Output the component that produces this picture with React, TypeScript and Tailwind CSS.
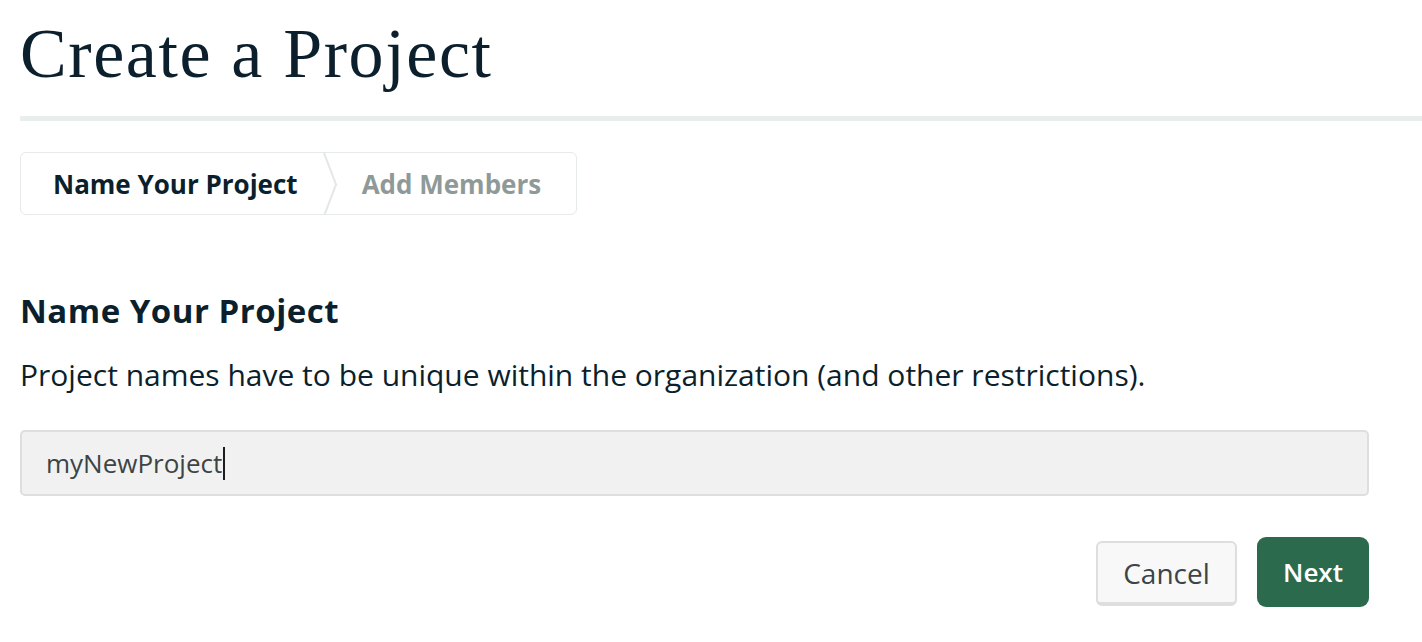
export default function App() {
  return (
    <div className="min-h-[642px] w-full bg-white pl-5 text-[#001e2b]" style={{ fontFamily: '"Open Sans", "Liberation Sans", sans-serif' }}>
      <h1
        className="pt-[14px] text-[70px] leading-[80px] font-normal tracking-[1.6px] text-[#0b1f2c]"
        style={{ fontFamily: '"Liberation Serif", serif' }}
      >
        Create a Project
      </h1>
      <div className="mt-[22px] h-[5px] w-full bg-[#e7eeec]" />

      <div className="mt-[31px] flex h-[63px] w-[557px] items-stretch overflow-hidden rounded-[6px] border border-[#e6eae9]">
        <div className="flex items-center pl-8 pr-[24px] pt-[1px] text-[26px] font-bold text-[#0b1f2c]">Name Your Project</div>
        <svg width="16" height="63" viewBox="0 0 16 63" className="shrink-0">
          <path d="M2 0 L14 31.5 L2 63" fill="none" stroke="#e3e7e6" strokeWidth="2" />
        </svg>
        <div className="flex items-center pl-[24px] pt-[1px] text-[26px] font-bold text-[#8f9a98]">Add Members</div>
      </div>

      <h2 className="mt-[76px] text-[33px] font-bold leading-[40px] tracking-[0.5px] text-[#0b1f2c]">Name Your Project</h2>
      <p className="mt-[24px] text-[30px] leading-[40px] text-[#0b1f2c]">
        Project names have to be unique within the organization (and other restrictions).
      </p>

      <div className="mt-[35px] flex h-[66px] w-[1349px] items-center rounded-[5px] border-2 border-[#dddedf] bg-[#f1f1f1] pl-[24px]">
        <span className="text-[26px] text-[#3d4445]">myNewProject</span>
        <span className="ml-[1px] h-[33px] w-[2px] bg-[#1c1c1c]" />
      </div>

      <div className="mt-[41px] flex w-[1349px] justify-end gap-[20px]">
        <button className="mt-[4px] h-[65px] w-[141px] rounded-[6px] border-2 border-b-4 border-[#dcdedf] bg-[#f8f8f8] text-[28px] text-[#3d4445]">
          Cancel
        </button>
        <button className="h-[70px] w-[112px] rounded-[9px] bg-[#2c6a4e] text-[26px] font-semibold text-white">
          Next
        </button>
      </div>
    </div>
  )
}
